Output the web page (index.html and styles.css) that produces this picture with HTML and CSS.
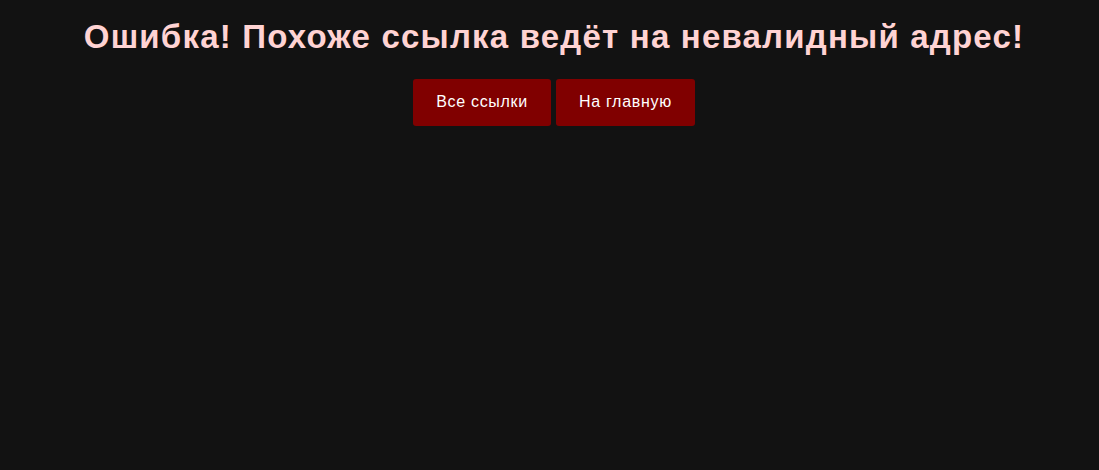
FILE: index.html
```html
<!DOCTYPE html>
<html lang="ru">
<head>
<meta charset="utf-8">
<link rel="stylesheet" href="styles.css">
</head>
<body>
<div class="page">
  <h1 class="title">Ошибка! Похоже ссылка ведёт на невалидный адрес!</h1>
  <div class="actions">
    <a class="btn" href="#">Все ссылки</a>
    <a class="btn" href="#">На главную</a>
  </div>
</div>
</body>
</html>
```
FILE: styles.css
```css
html, body {
  margin: 0;
  padding: 0;
  background: #121212;
  height: 100%;
}
.page {
  font-family: "Liberation Sans", Arial, sans-serif;
  text-align: center;
  padding-top: 18px;
  padding-left: 9px;
}
.title {
  margin: 0;
  font-size: 33px;
  letter-spacing: 1.2px;
  font-weight: bold;
  color: #ffd3d3;
  line-height: 38px;
}
.actions {
  margin-top: 23px;
  display: flex;
  justify-content: center;
  gap: 5px;
}
.btn {
  display: inline-block;
  background: #800000;
  color: #ffffff;
  text-decoration: none;
  font-size: 16px;
  letter-spacing: 0.7px;
  line-height: 18px;
  padding: 14px 23px 15px;
  border-radius: 3px;
}
```
